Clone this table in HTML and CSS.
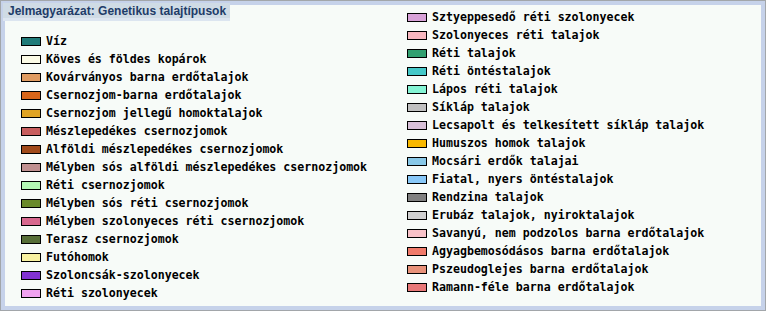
FILE: index.html
```html
<!DOCTYPE html>
<html lang="hu">
<head>
    <meta charset="UTF-8">
    <title>Jelmagyarázat: Genetikus talajtípusok</title>
    <link rel="stylesheet" href="styles.css">
</head>
<body>

    <div class="frame">
        <div class="panel">
            <div class="col col-left">
                <div class="title">Jelmagyarázat: Genetikus talajtípusok</div>
                <ul class="legend">
                    <li><span class="sw" style="background:#1f7b79"></span>Víz</li>
                    <li><span class="sw" style="background:#fbfbe6"></span>Köves és földes kopárok</li>
                    <li><span class="sw" style="background:#e09c62"></span>Kovárványos barna erdőtalajok</li>
                    <li><span class="sw" style="background:#d8661a"></span>Csernozjom-barna erdőtalajok</li>
                    <li><span class="sw" style="background:#e0a424"></span>Csernozjom jellegű homoktalajok</li>
                    <li><span class="sw" style="background:#c85e5e"></span>Mészlepedékes csernozjomok</li>
                    <li><span class="sw" style="background:#a04a1a"></span>Alföldi mészlepedékes csernozjomok</li>
                    <li><span class="sw" style="background:#c09090"></span>Mélyben sós alföldi mészlepedékes csernozjomok</li>
                    <li><span class="sw" style="background:#b4f8b4"></span>Réti csernozjomok</li>
                    <li><span class="sw" style="background:#6a8a2a"></span>Mélyben sós réti csernozjomok</li>
                    <li><span class="sw" style="background:#d8688e"></span>Mélyben szolonyeces réti csernozjomok</li>
                    <li><span class="sw" style="background:#566e36"></span>Terasz csernozjomok</li>
                    <li><span class="sw" style="background:#f8f2a0"></span>Futóhomok</li>
                    <li><span class="sw" style="background:#8232d2"></span>Szoloncsák-szolonyecek</li>
                    <li><span class="sw" style="background:#f0a2f0"></span>Réti szolonyecek</li>
                </ul>
            </div>
            <div class="col col-right">
                <ul class="legend">
                    <li><span class="sw" style="background:#d8a2d8"></span>Sztyeppesedő réti szolonyecek</li>
                    <li><span class="sw" style="background:#f8b8c0"></span>Szolonyeces réti talajok</li>
                    <li><span class="sw" style="background:#32a070"></span>Réti talajok</li>
                    <li><span class="sw" style="background:#44c8c8"></span>Réti öntéstalajok</li>
                    <li><span class="sw" style="background:#84f4d4"></span>Lápos réti talajok</li>
                    <li><span class="sw" style="background:#c0c0c0"></span>Síkláp talajok</li>
                    <li><span class="sw" style="background:#d8c0d8"></span>Lecsapolt és telkesített síkláp talajok</li>
                    <li><span class="sw" style="background:#f8b800"></span>Humuszos homok talajok</li>
                    <li><span class="sw" style="background:#88c8e8"></span>Mocsári erdők talajai</li>
                    <li><span class="sw" style="background:#88c8f8"></span>Fiatal, nyers öntéstalajok</li>
                    <li><span class="sw" style="background:#808080"></span>Rendzina talajok</li>
                    <li><span class="sw" style="background:#d0d0d0"></span>Erubáz talajok, nyiroktalajok</li>
                    <li><span class="sw" style="background:#f8c2c8"></span>Savanyú, nem podzolos barna erdőtalajok</li>
                    <li><span class="sw" style="background:#f07a6a"></span>Agyagbemosódásos barna erdőtalajok</li>
                    <li><span class="sw" style="background:#e8927a"></span>Pszeudoglejes barna erdőtalajok</li>
                    <li><span class="sw" style="background:#e87878"></span>Ramann-féle barna erdőtalajok</li>
                </ul>
            </div>
        </div>
    </div>

</body>
</html>
```

FILE: styles.css
```css
body {
    margin: 0;
    background: #ffffff;
}
.frame {
    width: 766px;
    height: 311px;
    box-sizing: border-box;
    border: 1px solid #a2a6aa;
}
.panel {
    height: 100%;
    box-sizing: border-box;
    border: 4px solid #c6d2ea;
    background-color: #f7fbf8;
    display: grid;
    grid-template-columns: 402px 1fr;
}
.title {
    width: 227px;
    height: 18px;
    margin: -2px 0 0 -2px;
    padding-left: 5px;
    box-sizing: border-box;
    background-color: #cfdbe5;
    border-bottom: 3px solid #dce5f0;
    font-family: "Liberation Sans", Arial, sans-serif;
    font-weight: bold;
    font-size: 12px;
    line-height: 17px;
    color: #1e3c68;
}
.legend {
    list-style: none;
    margin: 0;
    padding: 0;
    font-family: "DejaVu Sans Mono", "Liberation Mono", monospace;
    font-weight: bold;
    font-size: 11.6px;
    color: #000;
}
.col-left .legend {
    padding: 11px 0 0 16px;
}
.col-right .legend {
    padding-top: 3px;
}
.legend li {
    display: flex;
    align-items: center;
    height: 18px;
    white-space: nowrap;
}
.sw {
    width: 20px;
    height: 9px;
    box-sizing: border-box;
    border: 1px solid #000;
    margin-right: 5px;
    flex: none;
}
```
